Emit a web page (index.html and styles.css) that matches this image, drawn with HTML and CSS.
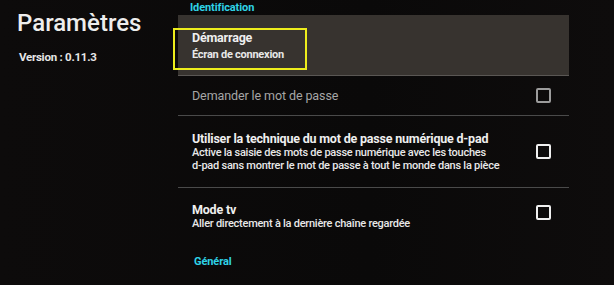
FILE: index.html
```html
<!DOCTYPE html>
<html lang="fr">
<head>
<meta charset="utf-8">
<title>Paramètres</title>
<link rel="stylesheet" href="styles.css">
</head>
<body>
<div class="screen">
  <aside class="side">
    <h1 class="page-title">Paramètres</h1>
    <p class="version">Version : 0.11.3</p>
  </aside>
  <main class="main">
    <div class="section-head">Identification</div>
    <div class="row row-focus">
      <div class="row-text">
        <div class="title">Démarrage</div>
        <div class="desc desc-focus">Écran de connexion</div>
      </div>
      <div class="focus-mark"></div>
    </div>
    <div class="row row-plain">
      <div class="row-text">
        <div class="label-dim">Demander le mot de passe</div>
      </div>
      <span class="check check-dim"></span>
    </div>
    <div class="row row-tall">
      <div class="row-text">
        <div class="title">Utiliser la technique du mot de passe numérique d-pad</div>
        <div class="desc">Active la saisie des mots de passe numérique avec les touches<br>d-pad sans montrer le mot de passe à tout le monde dans la pièce</div>
      </div>
      <span class="check"></span>
    </div>
    <div class="row row-last">
      <div class="row-text">
        <div class="title">Mode tv</div>
        <div class="desc">Aller directement à la dernière chaîne regardée</div>
      </div>
      <span class="check"></span>
    </div>
    <div class="section-head section-general">Général</div>
  </main>
</div>
</body>
</html>
```

FILE: styles.css
```css
html, body {
  margin: 0;
  padding: 0;
}
body {
  width: 614px;
  height: 285px;
  overflow: hidden;
  background: #0b0a0a;
  font-family: Roboto, "Noto Sans", sans-serif;
  color: #ececec;
}
.screen {
  display: flex;
  height: 285px;
  background: linear-gradient(90deg, #0d0b0b 0%, #0a0909 60%, #0e0c0c 100%);
}
.side {
  width: 178px;
  padding: 9px 0 0 17px;
  box-sizing: border-box;
}
.page-title {
  margin: 0;
  font-size: 24px;
  font-weight: 500;
  line-height: 28px;
  color: #ededed;
}
.version {
  margin: 13px 0 0 2px;
  font-size: 11.5px;
  font-weight: 700;
  line-height: 14px;
  color: #e6e6e6;
  letter-spacing: -0.25px;
}
.main {
  width: 391px;
  position: relative;
}
.section-head {
  padding-left: 12px;
  font-size: 11px;
  font-weight: 700;
  color: #2fd3e6;
  line-height: 15px;
  height: 15px;
  letter-spacing: -0.1px;
}
.row {
  display: flex;
  align-items: center;
  justify-content: space-between;
  padding: 0 18px 0 14px;
  border-bottom: 1px solid #4a4a4a;
  box-sizing: border-box;
}
.row-focus {
  position: relative;
  height: 61px;
  background: #37332f;
  border-bottom-color: #5a5754;
}
.row-plain { height: 40px; }
.row-tall { height: 72px; }
.row-last {
  height: 56px;
  border-bottom: none;
  align-items: flex-start;
  padding-top: 14px;
}
.row-last .check { margin-top: 3px; }
.title {
  font-size: 12.5px;
  font-weight: 700;
  line-height: 15px;
  color: #efefef;
  letter-spacing: -0.2px;
}
.desc {
  font-size: 11px;
  font-weight: 500;
  line-height: 13px;
  color: #e8e8e8;
  letter-spacing: -0.25px;
}
.desc-focus {
  margin-top: 3px;
  font-weight: 700;
}
.label-dim {
  font-size: 12.5px;
  font-weight: 400;
  color: #a6a6a6;
  letter-spacing: -0.1px;
}
.check {
  width: 11px;
  height: 11px;
  border: 2px solid #f0f0f0;
  border-radius: 2px;
  flex: none;
}
.check-dim {
  border-color: #9c9c9c;
}
.focus-mark {
  position: absolute;
  left: -5px;
  top: 13px;
  width: 130px;
  height: 38px;
  border: 2px solid #eded1c;
}
.section-general {
  margin-top: 10px;
  padding-left: 16px;
}
```
